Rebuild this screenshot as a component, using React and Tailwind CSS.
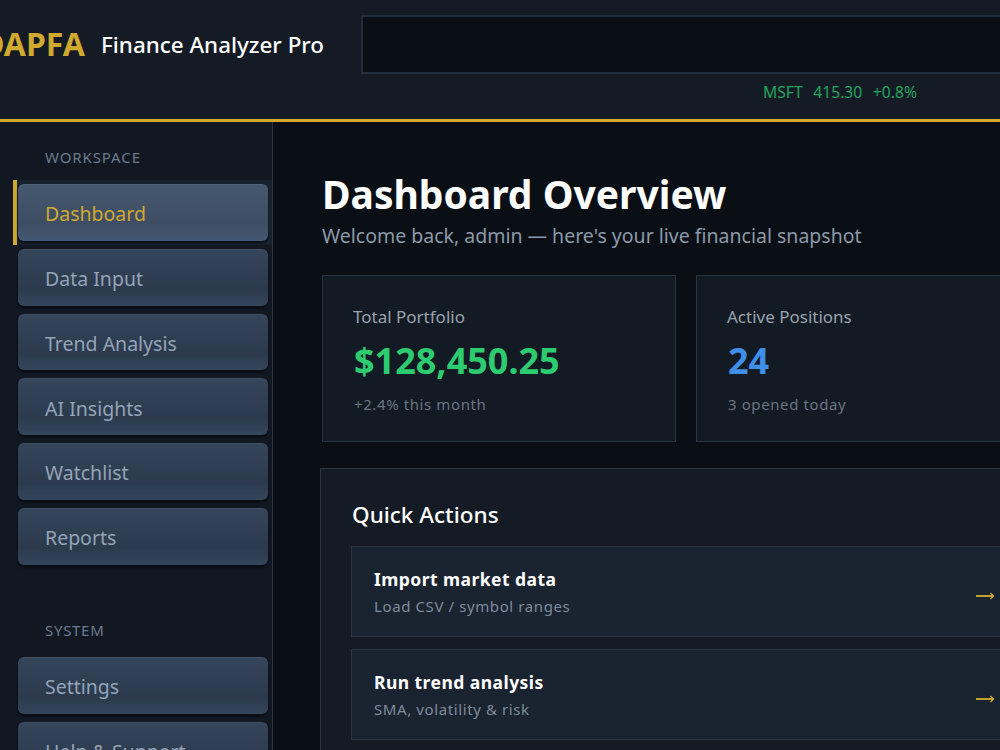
const workspace = ['Dashboard', 'Data Input', 'Trend Analysis', 'AI Insights', 'Watchlist', 'Reports'];
const system = ['Settings', 'Help & Support'];

function NavItem({ label, active }) {
  return (
    <div className={`h-[64.75px] ml-[13px] pl-px py-1 pr-1 border-l-4 ${active ? 'border-[#d0a92f] bg-[#18222f]' : 'border-transparent'}`}>
      <button className={`w-full h-[56.75px] pl-[27px] pt-[3px] text-left rounded-md text-[19.5px] shadow-[inset_0_1px_0_rgba(255,255,255,0.05),0_1px_0_#0a0e14,0_2px_3px_rgba(0,0,0,0.6)] ${active ? 'text-[#d0a92f] bg-gradient-to-b from-[#46586f] via-[#3d4d63] via-70% to-[#465973]' : 'text-[#94a3b8] bg-gradient-to-b from-[#36465a] via-[#2b3a4d] via-70% to-[#34465c]'}`}>
        {label}
      </button>
    </div>
  );
}

function StatCard({ label, value, color, note }) {
  return (
    <div className="w-[354px] h-[167px] shrink-0 px-[30px] pt-[29px] bg-[#121a24] border border-[#2a3442]">
      <div className="text-[17px] leading-[24px] text-[#9aa3ad]">{label}</div>
      <div className={`mt-[8px] ml-px text-[36px] leading-[48px] font-bold ${color}`}>{value}</div>
      <div className="mt-[9px] ml-px text-[15px] leading-[20px] tracking-[0.6px] text-[#6b7480]">{note}</div>
    </div>
  );
}

function ActionRow({ title, sub }) {
  return (
    <div className="h-[91px] flex items-center justify-between pl-[22px] pr-[15px] bg-[#1a2330] border border-[#2a3442]">
      <div>
        <div className="text-[17.5px] leading-[24px] font-bold tracking-[0.45px] text-white">{title}</div>
        <div className="mt-[5px] text-[15px] leading-[20px] tracking-[0.6px] text-[#7f8b9a]">{sub}</div>
      </div>
      <svg width="20" height="10" viewBox="0 0 20 10" fill="none" stroke="#d6b22f" className="mt-[9px]">
        <path d="M1 5H18" strokeWidth="1.8" />
        <path d="M15.5 2 L18.5 5 L15.5 8" strokeWidth="1.2" />
      </svg>
    </div>
  );
}

export default function App() {
  return (
    <div className="w-[1000px] h-[750px] overflow-hidden bg-[#0a0f16] font-['Noto_Sans',sans-serif]">
      <header className="h-[122px] flex items-start bg-[#141b25] border-b-[3px] border-[#d0a92f] overflow-hidden">
        <div className="mt-[21px] -ml-[19px] w-[104px] shrink-0 text-[32px] leading-[46px] font-bold text-[#d0a92f]">DAPFA</div>
        <div className="mt-[27px] ml-[16px] w-[260px] shrink-0 text-[22.4px] leading-[36px] font-medium text-white">Finance Analyzer Pro</div>
        <div className="mt-[15px] w-[720px] shrink-0">
          <div className="h-[59px] bg-[#0a0f16] border-2 border-[#222c3a]"></div>
          <div className="mt-[7px] pl-[402px] flex gap-[10.5px] text-[15.7px] leading-[22px] text-[#22a45d]">
            <span>MSFT</span><span>415.30</span><span>+0.8%</span>
          </div>
        </div>
      </header>
      <div className="flex h-[628px]">
        <aside className="w-[273px] shrink-0 bg-[#111822] border-r border-[#2a3442]">
          <div className="pl-[45px] pt-[25px] pb-[13px] text-[15px] leading-[20px] tracking-[0.9px] text-[#6b7a8c]">WORKSPACE</div>
          {workspace.map((item, i) => <NavItem key={item} label={item} active={i === 0} />)}
          <div className="pl-[45px] pt-[51px] pb-[13.5px] text-[15px] leading-[20px] tracking-[0.7px] text-[#6b7a8c]">SYSTEM</div>
          {system.map(item => <NavItem key={item} label={item} />)}
        </aside>
        <main className="flex-1 min-w-0 pl-[49px] pt-[47px]">
          <h1 className="text-[39px] leading-[50px] font-bold text-white">Dashboard Overview</h1>
          <p className="mt-[3px] text-[19.5px] leading-[28px] text-[#8c99a8]">Welcome back, admin — here's your live financial snapshot</p>
          <div className="mt-[25px] flex gap-5 w-[1100px]">
            <StatCard label="Total Portfolio" value="$128,450.25" color="text-[#2ecc71]" note="+2.4% this month" />
            <StatCard label="Active Positions" value="24" color="text-[#3f8ee8]" note="3 opened today" />
          </div>
          <section className="mt-[26px] -ml-[2px] w-[900px] h-[400px] px-[30px] pt-[30px] bg-[#141b25] border border-[#2a3442]">
            <h2 className="ml-px text-[22.5px] leading-[32px] font-medium text-white">Quick Actions</h2>
            <div className="mt-[15px] w-[660px] flex flex-col gap-3">
              <ActionRow title="Import market data" sub="Load CSV / symbol ranges" />
              <ActionRow title="Run trend analysis" sub="SMA, volatility & risk" />
            </div>
          </section>
        </main>
      </div>
    </div>
  );
}
